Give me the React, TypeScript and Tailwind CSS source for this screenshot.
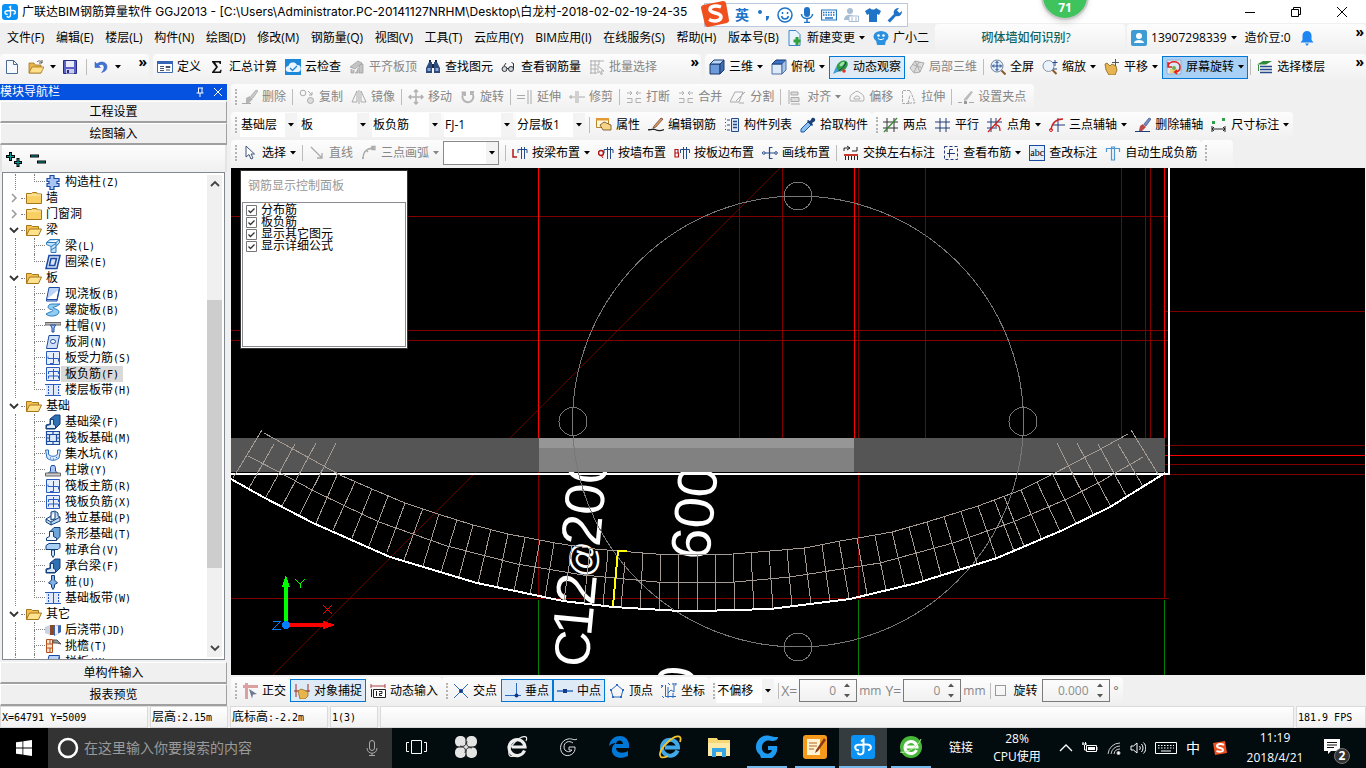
import type { ReactNode } from "react"
import { clsx } from "clsx"

// ---------- 图标 ----------
const icons: Record<string, ReactNode> = {
  app: (
    <>
      <rect width="16" height="16" rx="3" fill="#0a93f5" />
      <path d="M7 3.500 8.500 2.500v8.500c0 2.500-3 3-3.500 1M5.500 10C3 11 2 8 4 7c1-.5 3-.5 4.500-.5h2.500c3 0 3 3.500.5 3.500" fill="none" stroke="#fff" strokeWidth="1.400" />
    </>
  ),
  newFile: <path d="M2.500 1.500h7l4 4v9h-11zM9.500 1.500v4h4" fill="#f6faff" stroke="#4a6c96" />,
  open: (
    <>
      <path d="M1 14V4h5l1 2h6v8z" fill="#e9b44a" stroke="#9a6a12" strokeWidth=".7" />
      <path d="M1 14 4 8h12l-3 6z" fill="#ffe08a" stroke="#9a6a12" strokeWidth=".7" />
      <path d="M9 3c2-2 4-1 5 1m0-3v3h-3" fill="none" stroke="#555" />
    </>
  ),
  save: (
    <>
      <path d="M1.500 1.500h13v13h-13z" fill="#5a62c8" stroke="#262c86" />
      <path d="M4 2h8v6H4z" fill="#e9ecf8" />
      <path d="M4 10h8v4.500H4z" fill="#c9cdea" />
      <path d="M5 11h2v3H5z" fill="#262c86" />
    </>
  ),
  undo: <path d="M2 3v5.500h5.500L5.600 6.500C9 4.200 11.500 6 11 9c-.2 1.800-1 3-2.500 4.500 4.500-1 6-4 5.300-7C13 3 8 1.500 4 5z" fill="#4274d8" stroke="#2a55b0" strokeWidth=".5" />,
  define: (
    <>
      <path d="M.5 2.500h15v11H.5z" fill="#fff" stroke="#3c69b4" />
      <path d="M0 2h16v3H0z" fill="#3565b8" />
      <path d="M3 7.500h4M3 9.500h4M3 11.500h4M9 7.500h4v1H9zM9 11h4" stroke="#44536b" fill="none" />
    </>
  ),
  sigma: <path d="M3 2h9v3h-1.200L10 3.500H6.200L9 8l-3.500 4.500H10.500l1-1.700h1.200L12 14H3v-1l4-5-4-5z" fill="#111" />,
  cloud: (
    <>
      <path d="M0 0h16v16H0z" fill="#1e88d8" />
      <path d="M4 13a3 3 0 0 1-.5-6A4.500 4.500 0 0 1 12 6a3.500 3.500 0 0 1 .5 7z" fill="#eaf5ff" />
      <path d="m5 9 2.500 2.500L12 7" fill="none" stroke="#1e88d8" strokeWidth="1.300" />
    </>
  ),
  align: <path d="m1 8 8-6 4 2-7 6zM2 10v4h3v-3M6 14h3v-5M10 14h4V5h-2l-2 2z" fill="#c4c4c4" stroke="#999" strokeWidth=".7" />,
  binocular: (
    <>
      <path d="M1 9 4 3h3v11H1zM9 3h3l3 6v5H9z" fill="#2d4b7c" />
      <path d="M4 1h2v2H4zM10 1h2v2h-2zM7 5h2v4H7z" fill="#15294d" />
      <path d="M2.500 9h3v3h-3zM10.500 9h3v3h-3z" fill="#86a6d6" />
    </>
  ),
  glasses: (
    <>
      <circle cx="3.500" cy="10" r="2.500" fill="#cfd7e2" stroke="#333" />
      <circle cx="10" cy="10" r="2.500" fill="#cfd7e2" stroke="#333" />
      <path d="M6 9.500h1.500M12.500 9.500V4.500L10.500 3.500M3 7l2-3" stroke="#333" fill="none" />
    </>
  ),
  batch: <path d="M1 2h14M1 6h9M1 10h7M1 14h7M2 1v14M6 1v14M10 1v5M9 7l6 5h-3l1.500 3-1.500.5-1.300-3L9 14z" fill="none" stroke="#b0b0b0" />,
  cube: (
    <>
      <path d="M1 5h10v10H1z" fill="#6d9ad8" stroke="#1d3b70" />
      <path d="m1 5 4-4h10l-4 4z" fill="#bcd6f7" stroke="#1d3b70" />
      <path d="m11 5 4-4v10l-4 4z" fill="#3f6cb0" stroke="#1d3b70" />
    </>
  ),
  topView: (
    <>
      <path d="M1 5h10v10H1z" fill="#dfeaf8" stroke="#4a6ea8" />
      <path d="m1 5 4-4h10l-4 4z" fill="#3c74c8" stroke="#1d3b70" />
      <path d="m11 5 4-4v10l-4 4z" fill="#a9c6ea" stroke="#4a6ea8" />
    </>
  ),
  orbit: (
    <>
      <ellipse cx="9" cy="7" rx="6.500" ry="4.500" transform="rotate(-40 9 7)" fill="#2f9a48" />
      <ellipse cx="9" cy="5" rx="3" ry="1.500" transform="rotate(-40 9 5)" fill="#9be3a5" />
      <path d="M2 13c5-1 9-4 11-10" fill="none" stroke="#225" strokeWidth=".8" />
      <circle cx="11" cy="12" r="1.800" fill="#d33" />
      <path d="M0 15 3 8l3 4z" fill="#3c9cdc" />
    </>
  ),
  local3d: <path d="m1 9 5-7 9 2-4 9-6 1zM6 2l5 11M3.500 5.500l8.500 3M10 3l-5 10" fill="#ddd" stroke="#aaa" />,
  fullscreen: (
    <>
      <circle cx="7" cy="7" r="6" fill="#e4eefb" stroke="#6c7f99" />
      <path d="m11.500 11.500 4 4" stroke="#8a5a28" strokeWidth="2" />
      <path d="M7 2.500v9M2.500 7h9M5.500 4 7 2.500 8.500 4M5.500 10 7 11.500 8.500 10M4 5.500 2.500 7 4 8.500M10 5.500 11.500 7 10 8.500" fill="none" stroke="#234a8c" />
    </>
  ),
  zoom: (
    <>
      <circle cx="6.500" cy="7" r="5.500" fill="#eaf2fb" stroke="#8894a5" />
      <path d="m10.500 11 4 4" stroke="#8a5a28" strokeWidth="2" />
      <path d="M13 1v6M10.500 3.500h5M11 10h4" stroke="#234a8c" />
    </>
  ),
  pan: (
    <>
      <path d="M1 5l2-1 3 3 2-2 4 2 1 4-2 5H5l-3-5z" fill="#e6b552" stroke="#8d6418" strokeWidth=".8" />
      <path d="M11.500 0v7M8 3.500h7" stroke="#555" />
    </>
  ),
  rotateScreen: (
    <>
      <path d="M1 1h14v14H1z" fill="#dce8f4" stroke="#8fb0d0" />
      <path d="M4 10h8v4H4z" fill="#e8d27a" />
      <circle cx="8" cy="9" r="2" fill="#6fae4c" />
      <path d="M2 8c0-7 12-7 12 0 0 3-2 5-5 5M2 3v5h4M11 11l-2.500 2 2.500 2" fill="none" stroke="#e02020" strokeWidth="1.500" />
    </>
  ),
  floors: (
    <>
      <path d="M0 5.500 6 2h9L9 5.500z" fill="#2f8a3c" />
      <path d="M3 7.500h12M3 10.500h12M3 13.500h12" stroke="#234a8c" strokeWidth="1.500" />
      <path d="M1.500 6v6" stroke="#2f8a3c" />
    </>
  ),
  brush: (
    <>
      <path d="m9 7 5-6 2 1-5 7z" fill="#c9c9c9" stroke="#999" strokeWidth=".6" />
      <path d="m4 9 4-2 3 3-4 4H4z" fill="#b5b5b5" />
      <path d="M0 14.500h9" stroke="#aaa" />
    </>
  ),
  copy: (
    <>
      <circle cx="4" cy="4" r="2.800" fill="none" stroke="#aaa" />
      <circle cx="11.500" cy="11.500" r="3" fill="#ddd" stroke="#aaa" />
      <path d="m9 2 4 4m0-3v3h-3" stroke="#aaa" fill="none" />
    </>
  ),
  mirror: <path d="M6 2v11H1zM10 2v11h5zM8 1v14" fill="none" stroke="#aaa" />,
  move: <path d="M8 1v14M1 8h14M6 3l2-2 2 2M6 13l2 2 2-2M3 6 1 8l2 2M13 6l2 2-2 2" fill="none" stroke="#b0b0b0" strokeWidth="1.500" />,
  rotate: <path d="M12 4a5.500 5.500 0 1 1-8-.2M1.500 3.500h3.500V7M14 3h-3v3" fill="none" stroke="#b5b5b5" strokeWidth="2" />,
  extend: <path d="M0 6.500h8M0 9.500h8M11 1v14M14 1v14" fill="none" stroke="#aaa" />,
  trim: <path d="M0 8h6M10 8h6M7 2v12M9 2v12M2 6v4" fill="none" stroke="#aaa" />,
  breakIcon: <path d="M1 4h5M4 2l2 2-2 2M15 4h-5M12 2l-2 2 2 2M1 9.500h5v4H1M15 9.500h-5v4h5" fill="none" stroke="#b0b0b0" />,
  split: <path d="M0 13h9l4-10H5zM6 12l9-9M9 14h5" fill="none" stroke="#aaa" />,
  alignEdge: <path d="M2 1v14M4 3h7v3H4zM4 8.500h8v4H4zM4 15h9" fill="#ddd" stroke="#aaa" />,
  offset: <path d="M5 4a3.500 3.500 0 0 1 6 0c3 1 5 4 3.500 8h-13C0 8 2 5 5 4zM5 10c0-4 6-4 6 0z" fill="none" stroke="#b0b0b0" />,
  stretch: <path d="M9 1.500H1.500v13H9M9 2l2 4 3 8H7l2-8" fill="none" stroke="#aaa" strokeDasharray="3 1" />,
  grip: (
    <>
      <path d="M0 13.500h4M11 13.500h5" stroke="#aaa" />
      <path d="m6 10 7-8 2 1-6 8-3 1z" fill="#bbb" />
      <path d="M6 12h3v3H6z" fill="#999" />
    </>
  ),
  props: (
    <>
      <path d="M.5 1.500h12v9H.5z" fill="#fff6dc" stroke="#b88428" />
      <path d="M0 1h13v2.500H0z" fill="#e39a35" />
      <path d="m4 8 4-3 7 3v5H7z" fill="#f5d48a" stroke="#6a4a14" strokeWidth=".8" />
    </>
  ),
  editBar: (
    <>
      <path d="M0 12.500c3 1 5-1 7 0s5 2 9 0" stroke="#222" strokeWidth="1.300" fill="none" />
      <path d="m6 9 7-8 2 1-7 8-3 1z" fill="#d89a5a" stroke="#522" strokeWidth=".6" />
    </>
  ),
  list: (
    <>
      <path d="M1 2h1M1 5.500h1M1 9h1M1 12.500h1M3 3h3M3 8h3M3 13h3" stroke="#234a8c" />
      <path d="M7.500 1.500h7v13h-7z" fill="#dfe8f5" stroke="#234a8c" />
      <path d="M9 4.500h4M9 7.500h4M9 10.500h4" stroke="#234a8c" strokeWidth="1.500" />
    </>
  ),
  picker: (
    <>
      <path d="M1 15v-3l7-7 3 3-7 7z" fill="#8cc0ef" stroke="#1d5ba8" />
      <path d="m8 3 2 1 2-3c2-1 4 1 3 3l-3 2 1 2-1 1-5-5z" fill="#1c3f77" />
    </>
  ),
  twoPoint: <path d="M0 5h15M0 11h15M5 1v14M11 1v14" fill="none" stroke="#223a7a" />,
  axisPoint: (
    <>
      <path d="M0 5h15M0 11h15M4 1v14M11 1v14" fill="none" stroke="#333" />
      <path d="M1 15 14 1" stroke="#3a8a3a" strokeWidth="1.300" />
    </>
  ),
  axisAngle: (
    <>
      <path d="M0 5h15M0 11h10M4 1v14M9 1v9" fill="none" stroke="#223a7a" />
      <path d="M1 15 14 1M9 8c3 0 4 2 4 6" stroke="#c22" fill="none" strokeWidth="1.300" />
    </>
  ),
  threeAxis: (
    <>
      <path d="M9 1v14M4 8h12" stroke="#223a7a" />
      <path d="M14 2C7 2 3 6 2 13" fill="none" stroke="#c22" strokeWidth="1.500" />
      <circle cx="2" cy="13" r="1.500" fill="none" stroke="#c22" />
    </>
  ),
  delAxis: (
    <>
      <path d="m9 7 5-6 2 1-5 7z" fill="#7690c8" stroke="#223a7a" strokeWidth=".6" />
      <path d="m5 9 3-2 3 3-4 4H4z" fill="#b84a4a" />
      <path d="M0 14.500h15" stroke="#223a7a" />
    </>
  ),
  dimension: (
    <>
      <path d="M1 9v6M14 9v6M1 12h13M3 10l-2 2 2 2M12 10l2 2-2 2" fill="none" stroke="#222" />
      <path d="M1 4h3v3H1zM11 1h3v3h-3z" fill="#2fa04a" />
    </>
  ),
  cursor: <path d="M4 1v11l3-2.500L9 14l2-1-2-4h3.500z" fill="#fff" stroke="#3d567c" />,
  lineTool: <path d="m2 2 11 11m0-5v5H8" fill="none" stroke="#aaa" strokeWidth="1.300" />,
  arcTool: <path d="M2 14C2 7 6 3 13 3M1 13h2M11 1.500h3v3h-3zM5 5l2 2" fill="none" stroke="#aaa" strokeWidth="1.300" />,
  byBeam: (
    <>
      <path d="M1 4v8h4" fill="none" stroke="#b01818" strokeWidth="1.500" />
      <path d="M6 8V4.500h9V8M9.500 2v12M12.500 2v12" stroke="#234a8c" fill="none" />
    </>
  ),
  byWall: (
    <>
      <circle cx="3" cy="8" r="2.500" fill="none" stroke="#b01818" strokeWidth="1.500" />
      <path d="m3 10 2 3" stroke="#b01818" />
      <path d="M6 8V4.500h9V8M9.500 2v12M12.500 2v12" stroke="#234a8c" fill="none" />
    </>
  ),
  bySlab: (
    <>
      <path d="M1 4.500h3v3.500H1zM1 8h3.500v4H1z" fill="none" stroke="#b01818" strokeWidth="1.200" />
      <path d="M6.500 8V4.500h9V8M9.500 2v12M12.500 2v12" stroke="#234a8c" fill="none" />
    </>
  ),
  byLine: (
    <>
      <path d="M3 8h4M9.500 8h3M10.500 2.500h-3v11h3M9.500 8H7.500" fill="none" stroke="#234a8c" strokeWidth="1.200" />
      <circle cx="1.800" cy="8" r="1.300" fill="none" stroke="#234a8c" />
      <circle cx="14" cy="8" r="1.300" fill="none" stroke="#234a8c" />
    </>
  ),
  swap: (
    <>
      <path d="M1 6V3h6M4 1l3 2-3 2M14 2v4H9" fill="none" stroke="#222" />
      <path d="M1 9h14v2H1z" fill="#c83a2a" />
      <path d="M2.500 11v4M5.500 11v4M8.500 11v4M11.500 11v4M14.500 11v4" stroke="#222" />
    </>
  ),
  viewBar: (
    <>
      <path d="M1.500 1.500h13v13h-13z" fill="none" stroke="#223a7a" strokeDasharray="3 2" />
      <path d="M10 4.500H6.500v8M4 8.500h8" fill="none" stroke="#223a7a" />
    </>
  ),
  autoBar: <path d="M1.500 7V3.500h13V7M6.500 2v13h3V2z" fill="none" stroke="#4c96d4" strokeWidth="1.200" />,
  ortho: (
    <>
      <path d="M1 2h15v3H1zM3 0h3v16H3z" fill="#dba0a0" />
      <path d="m7 6 8 5-4 .5-1 4z" fill="#6b7890" />
    </>
  ),
  snap: (
    <>
      <path d="M2 1v13M14 1v8M0 8h5M11 8h5" stroke="#a02828" />
      <path d="m4 8 3-2 3 1 4 2v4l-3 3H6z" fill="#e8b44c" stroke="#8d6418" strokeWidth=".7" />
    </>
  ),
  dynInput: (
    <>
      <path d="M1 1v4M15 1v4M1 3h14" stroke="#b04040" />
      <path d="M3.500 6.500h12v8h-12z" fill="#fff" stroke="#222" />
      <path d="M6.500 8v5M9 8.500h3v2H9.500v2H12" stroke="#222" fill="none" />
      <path d="M1.500 6v8" stroke="#222" />
    </>
  ),
  cross: (
    <>
      <path d="M1 1 15 15M15 1 1 15" stroke="#2a6ac0" />
      <circle cx="8" cy="8" r="2" fill="#123a8a" />
    </>
  ),
  perp: (
    <>
      <path d="M0 12.500h16M11.500 0v13" stroke="#2a6ac0" />
      <circle cx="11.500" cy="12.500" r="2" fill="#123a8a" />
    </>
  ),
  mid: (
    <>
      <path d="M0 8h16" stroke="#2a6ac0" strokeWidth="1.500" />
      <path d="M6 6h4v4H6z" fill="#123a8a" />
    </>
  ),
  vertex: (
    <>
      <path d="m8 2 6 5-2 7H4L2 7z" fill="none" stroke="#2a6ac0" />
      <path d="M7 1h2v2H7zM1 6h2v2H1zM13 6h2v2h-2zM3 13h2v2H3zM11 13h2v2h-2z" fill="#2a6ac0" />
    </>
  ),
  coord: <path d="M4.500 2v11.500H15M7 4v6l3-3 3 2V3M0 2l2 2M2 2 0 5M7 0l2 2M12 0h3v2h-3zM1 13l2 2M7 10v5M12 10v5" fill="none" stroke="#2a6ac0" />,
  newChange: (
    <>
      <path d="M2 .500h7l4 4v11H2z" fill="#eaf4ff" stroke="#3c86c8" />
      <path d="M10 7v8M6.500 11h7" stroke="#2fa03a" strokeWidth="3" />
    </>
  ),
  mascot: (
    <>
      <ellipse cx="8" cy="6.500" rx="7.500" ry="5.500" fill="#2a90e0" />
      <path d="M3 10h10l-1 5H4z" fill="#2a90e0" />
      <circle cx="5.500" cy="5.500" r="1.300" fill="#fff" />
      <circle cx="10.500" cy="5.500" r="1.300" fill="#fff" />
      <path d="M5 8.500c2 1.500 4 1.500 6 0" stroke="#fff" fill="none" />
    </>
  ),
  user: (
    <>
      <rect width="16" height="16" rx="2" fill="#3f9bd4" />
      <circle cx="8" cy="6" r="3" fill="#fff" />
      <path d="M3 13c0-4 10-4 10 0z" fill="#fff" />
    </>
  ),
  bell: <path d="M8 1a4.500 4.500 0 0 1 4.500 4.500V10l2 2.500h-13l2-2.500V5.500A4.500 4.500 0 0 1 8 1zM6 13.500h4L8 16z" fill="#1e86f0" />,
  folder: (
    <>
      <path d="M.5 3.500h5l1-1h4l1 1.500h4v9.500H.5z" fill="#f7cf63" stroke="#a5761c" />
      <path d="M1 5h14" stroke="#fff1bd" />
    </>
  ),
  folderOpen: (
    <>
      <path d="M.5 13.500V3.500h5l1 1h6V7" fill="#f1c24e" stroke="#a5761c" />
      <path d="m.5 13.500 3-6.500h12l-3 6.500z" fill="#ffe28e" stroke="#a5761c" />
    </>
  ),
  column: <path d="M5 1.500h4v3h5v3h-2v2h2v3H9v3H5v-3H2v-3h2v-2H2v-3h3z" fill="#a9c6f2" stroke="#1c4aa0" strokeWidth="1.200" />,
  beam: <path d="M1.500 4.500 5 1.500h9.500v3l-3.500 4v6H6v-6l-4.500-2zM1.500 4.500H11l3.500-3M11 4.500v4M6 8.500l5-3M6 12l5-3" fill="#c5e2fa" stroke="#2c7cc0" />,
  ringBeam: <path d="M4 1.500h11l-3 13H1z M6 4.500h5.500l-1.800 7H4.400z" fill="#d7e5fb" stroke="#1c4aa0" strokeWidth="1.500" />,
  slab: <path d="M4 1.500h10.500l-2.500 12H1.500z M1.500 13.500v1.500H12l2.500-12" fill="#bcd3f8" stroke="#1c4aa0" />,
  spiral: <path d="M15 2H7C2 2 2 7 6 7.500c3 .5 2 2-1 2.500L1 12c2 3 12 3 13-2 0-3-6-3-6-4.500L12 4z" fill="#8fcdf2" stroke="#2c7cc0" />,
  cap: (
    <>
      <path d="M0 4.500h16v2.500H0z" fill="#bbb" stroke="#666" />
      <path d="M5.500 7h5l-1.500 3v4H7v-4z" fill="#a9c6f2" stroke="#1c4aa0" />
    </>
  ),
  slabHole: (
    <>
      <path d="M4 1.500h10.500l-2.500 13H1.500z" fill="#d0e0fa" stroke="#1c4aa0" />
      <ellipse cx="8" cy="7.500" rx="2.500" ry="2" fill="#fff" stroke="#1c4aa0" />
    </>
  ),
  barMain: (
    <>
      <path d="M1.500 1.500h13v13h-13z" fill="#e5eefc" stroke="#2a5cc0" />
      <path d="M8.500 3v10.500M3 8.500V6.500M3 8.500h10.500v3M5 13.500h3.500" fill="none" stroke="#2a5cc0" />
    </>
  ),
  barNeg: (
    <>
      <path d="M1.500 1.500h13v13h-13z" fill="#e5eefc" stroke="#2a5cc0" />
      <path d="M8.500 3v10.500M3.500 8V5.500h10V8M3.500 12.500v-2.500h10v2.500" fill="none" stroke="#2a5cc0" />
    </>
  ),
  strip: (
    <>
      <path d="M1 3h14v10H1z" fill="#dfe9fb" />
      <path d="M0 13.500h16M0 2.500h16M8.500 3v10" fill="none" stroke="#2a5cc0" />
      <path d="M3.500 4v9M13.500 4v9" stroke="#2a5cc0" strokeDasharray="2 1" />
    </>
  ),
  footBeam: (
    <>
      <path d="M1 15v-4l4-1V5l5-4h5v9l-5 5z" fill="#2f6fb4" stroke="#123f78" />
      <path d="M1.500 14.500v-3l4-1V5.500h3v5l2 1v3z" fill="#dceaf8" stroke="#123f78" />
    </>
  ),
  raft: <path d="M1.500 1.500h13v13h-13zM4.500 4.500h7v7h-7zM8 1v4M8 11v4M1 8h4M11 8h4M1 4.500h3M12 4.500h3M1 11.500h3M12 11.500h3" fill="#dceaf8" stroke="#1c4aa0" strokeWidth="1.200" />,
  pit: <path d="M.5 4h3v4c1 3 8 3 9 0V4h3L14 12c-3 3-9 3-12 0zM5 12h1M8 13h1M11 11.500h1" fill="#d6e9fb" stroke="#2c6cc0" />,
  pier: (
    <>
      <path d="M5.500 9V5.500l1-2h3l1 2V9l2 2h-9z" fill="#a9c6f2" stroke="#1c4aa0" />
      <path d="M.5 11h15v3H.5z" fill="#ccc" stroke="#666" />
    </>
  ),
  isolated: <path d="m1 9 5-3V2l4-1 3 2v3l2 1v4l-9 4-5-3zM6 6v4l4-1V2M1 9l5 3 9-5M6 12v3" fill="#bcd9f5" stroke="#123f78" />,
  stripFoot: (
    <>
      <path d="M5 5.500 9 1.500h6v9l-4 4z" fill="#6fa4d8" stroke="#123f78" />
      <path d="M1.500 14.500v-2.500l3-1.500v-5h4v5l3 1.500v2.500z" fill="#eef5fc" stroke="#123f78" />
    </>
  ),
  pileCap: (
    <>
      <path d="m1 3.500 3-2h11v4l-2 2H1z" fill="#a9d0f5" stroke="#123f78" />
      <path d="M6.500 8h3v5L8 15.500 6.500 13z" fill="#cfe4f8" stroke="#123f78" />
    </>
  ),
  pile: <path d="M6.500 1.500h3V6l3 3-3 1.500v2.500L8 15.500 6.500 13v-2.500L3.500 9l3-3z" fill="#7fb0e6" stroke="#123f78" />,
  pour: (
    <>
      <path d="M5 3h5v10H5z" fill="#8a4a2a" />
      <path d="m0 5 5-2v10l-5-2z" fill="#c9d3e4" />
      <path d="m9 4 7-1v7l-7 4z" fill="#3d62ae" />
      <path d="m10 4 3 0v8l-3 1z" fill="#e9eef8" />
    </>
  ),
  eave: (
    <>
      <path d="M1.500 1.500h6v13h-6zM2 6h6M2 10h6M5 2v4M5 10v5" fill="#fbe3cf" stroke="#b0501c" />
      <path d="M8 2h4l4 4-4-1H8z" fill="#999" stroke="#555" />
    </>
  ),
}

function Icon({ name, className = "size-4" }: { name: string; className?: string }) {
  return (
    <svg viewBox="0 0 16 16" className={clsx("shrink-0", className)} aria-hidden="true">
      {icons[name]}
    </svg>
  )
}

// ---------- 工具栏部件 ----------
function Caret({ className = "" }: { className?: string }) {
  return (
    <svg viewBox="0 0 6 4" className={clsx("h-1 w-1.5 shrink-0", className)} aria-hidden="true">
      <path d="M0 0h6L3 3.500z" fill="currentColor" />
    </svg>
  )
}

function Group({ children, className = "" }: { children: ReactNode; className?: string }) {
  return (
    <div className={clsx("flex h-[27px] shrink-0 items-center rounded-sm bg-linear-to-b from-[#fdfdfd] to-[#f0f0f0]", className)}>
      {children}
    </div>
  )
}

function Handle() {
  return <span className="ml-1 mr-px h-4 w-0 shrink-0 border-l-2 border-dotted border-[#b4b4b4]" />
}

function Sep() {
  return <span className="mx-0.5 h-4 w-px shrink-0 bg-[#bdbdbd]" />
}

type ToolProps = { icon?: string; label: string; caret?: boolean; active?: boolean; disabled?: boolean; strong?: boolean }

function Tool({ icon, label, caret, active, disabled, strong }: ToolProps) {
  return (
    <button
      disabled={disabled}
      className={clsx(
        "flex h-[23px] shrink-0 items-center gap-1 whitespace-nowrap px-1",
        active && "outline outline-[#0078d7] -outline-offset-1",
        active && (strong ? "bg-[#a9d1f5]" : "bg-[#deebf7]"),
        disabled ? "text-[#868686]" : "text-black",
      )}
    >
      {icon && <Icon name={icon} />}
      <span>{label}</span>
      {caret && <Caret />}
    </button>
  )
}

function Combo({ label, value, className }: { label: string; value: string; className: string }) {
  return (
    <div className={clsx("relative h-6 shrink-0 bg-white", className)}>
      <select aria-label={label} className="h-full w-full appearance-none bg-transparent pl-px pr-3 outline-none">
        <option>{value}</option>
      </select>
      <span className="pointer-events-none absolute inset-y-0 right-0 flex w-3 items-center justify-center bg-[#f3f3f3]">
        <Caret />
      </span>
    </div>
  )
}

function More() {
  return <button className="shrink-0 self-start pr-0.5 text-sm leading-4 font-bold" aria-label="更多">»</button>
}

function Spin({ id, value, className }: { id: string; value: string; className: string }) {
  return (
    <div className={clsx("flex h-[23px] shrink-0 border border-[#7a7a7a] text-[#8c8c8c]", className)}>
      <input id={id} defaultValue={value} disabled className="w-0 flex-1 bg-transparent text-right outline-none" />
      <div className="ml-2 flex w-3 flex-col justify-around text-[#555]">
        <button aria-label="增加"><Caret className="rotate-180" /></button>
        <button aria-label="减少"><Caret /></button>
      </div>
    </div>
  )
}

// 宋体风格文字:半角字符占 6px
function Song({ text }: { text: string }) {
  return (
    <>
      {text.split(/([\x20-\x7e]+)/).map((part, i) =>
        i % 2 ? (
          <span key={i} className="font-['DejaVu_Sans_Mono',monospace] text-[10px]">{part}</span>
        ) : (
          part
        ),
      )}
    </>
  )
}

// ---------- 标题栏和菜单 ----------
function TitleBar() {
  return (
    <header className="relative flex h-[23px] shrink-0 items-center bg-white">
      <Icon name="app" className="ml-0.5 size-4" />
      <h1 className="ml-1 flex-1 whitespace-nowrap font-['Inter','Noto_Sans_CJK_SC',sans-serif]">
        广联达BIM钢筋算量软件 GGJ2013 - [C:\Users\Administrator.PC-20141127NRHM\Desktop\白龙村-2018-02-02-19-24-35
      </h1>
      <button aria-label="最小化" className="flex w-[46px] justify-center">
        <svg viewBox="0 0 12 12" className="size-3"><path d="M1 6.500h10" stroke="#000" /></svg>
      </button>
      <button aria-label="还原" className="flex w-[46px] justify-center">
        <svg viewBox="0 0 12 12" className="size-3"><path d="M1.500 3.500h7v7h-7zM3.500 3.500v-2h7v7h-2" fill="none" stroke="#000" /></svg>
      </button>
      <button aria-label="关闭" className="mr-px flex w-[46px] justify-center">
        <svg viewBox="0 0 12 12" className="size-3"><path d="m1 1 10 10M11 1 1 11" stroke="#000" /></svg>
      </button>
      <InputMethodBar />
      <div className="absolute -top-7 left-[1041px] z-10 flex size-12 items-end justify-center rounded-full border-2 border-[#c9c9c9] bg-[#3fc35c] pb-0.5 text-xs font-bold text-white shadow-md">71</div>
    </header>
  )
}

function InputMethodBar() {
  return (
    <div className="absolute left-[704px] top-[3px] z-10 flex h-6 w-[204px] items-center justify-between border border-[#b9c9e0] bg-white pl-[30px] pr-1 text-[#1f74c8]">
      <svg viewBox="0 0 28 28" className="absolute -left-1 -top-1 size-7">
        <path d="m2 5 20-4a3 3 0 0 1 3 2l3 17a3 3 0 0 1-2 3L7 27a3 3 0 0 1-3-2L0 8a3 3 0 0 1 2-3z" fill="#f0501e" />
        <path d="M20 7c-5-2-11-1-11 2.500C9 14 20 12 20 17c0 4-7 5-12 2.500" fill="none" stroke="#fff" strokeWidth="3.500" />
      </svg>
      <b className="text-sm">英</b>
      <svg viewBox="0 0 16 16" className="size-4"><circle cx="5" cy="5" r="2" fill="currentColor" /><path d="M11 9h3c0 3-1 4-3 5z" fill="currentColor" /></svg>
      <svg viewBox="0 0 16 16" className="size-4" fill="none" stroke="currentColor" strokeWidth="1.500"><circle cx="8" cy="8" r="7" /><path d="M4.500 9c1 4 6 4 7 0M5.500 5v2M10.500 5v2" /></svg>
      <svg viewBox="0 0 16 16" className="size-4"><rect x="5" y="0" width="6" height="10" rx="3" fill="currentColor" /><path d="M2.500 7c0 6 11 6 11 0M8 12v4M5 15.500h6" fill="none" stroke="currentColor" strokeWidth="1.500" /></svg>
      <svg viewBox="0 0 16 16" className="size-4"><path d="M.5 3h15v10H.5z" fill="none" stroke="currentColor" strokeWidth="1.200" /><path d="M2 5.500h12M2 8h12" stroke="currentColor" strokeWidth="1.500" strokeDasharray="1.500 1" /><path d="M4 11h8" stroke="currentColor" strokeWidth="1.500" /></svg>
      <svg viewBox="0 0 16 16" className="size-4"><circle cx="7" cy="4" r="3" fill="#a9bdd4" /><path d="M1 13c0-7 11-7 11 0z" fill="#a9bdd4" /><path d="M6 9h9.500v5.500H6z" fill="#fff" stroke="#a9bdd4" /><path d="M8 11h2M8 13h2M12 11h2M12 13h2" stroke="#a9bdd4" /></svg>
      <svg viewBox="0 0 16 16" className="size-4"><path d="M5 1c1 2 5 2 6 0l5 3-2 4-2-1v8H4V7L2 8 0 4z" fill="currentColor" /></svg>
      <svg viewBox="0 0 16 16" className="size-4"><path d="M15 4a4.500 4.500 0 0 1-6 5l-6 6.500-2.500-2L7 7a4.500 4.500 0 0 1 5-6L10 3.500 12.500 6z" fill="currentColor" /></svg>
    </div>
  )
}

const menus = [
  "文件(F)", "编辑(E)", "楼层(L)", "构件(N)", "绘图(D)", "修改(M)", "钢筋量(Q)", "视图(V)",
  "工具(T)", "云应用(Y)", "BIM应用(I)", "在线服务(S)", "帮助(H)", "版本号(B)",
]

function MenuBar() {
  return (
    <nav className="flex h-[29px] shrink-0 items-center">
      <div className="flex w-[783px] shrink-0 items-center justify-between pl-[7px] pr-1">
        {menus.map((m) => (
          <button key={m} className="whitespace-nowrap">{m}</button>
        ))}
      </div>
      <Tool icon="newChange" label="新建变更" caret />
      <Tool icon="mascot" label="广小二" />
      <Group className="ml-0.5 w-[190px] justify-center pr-2">
        <a href="#help" className="font-medium text-[#0b6464]">砌体墙如何识别?</a>
      </Group>
      <Group className="ml-0.5 flex-1">
        <Tool icon="user" label="13907298339" caret />
        <Tool label="造价豆:0" />
        <button aria-label="消息" className="px-1"><Icon name="bell" /></button>
        <span className="flex-1" />
        <More />
      </Group>
    </nav>
  )
}

function MainToolbar() {
  return (
    <div className="flex h-[30px] shrink-0 items-center">
      <Group className="w-[149px] pl-1">
        <button aria-label="新建"><Icon name="newFile" /></button>
        <button aria-label="打开" className="ml-2 flex items-center gap-1.5"><Icon name="open" /><Caret /></button>
        <button aria-label="保存" className="mx-1.5"><Icon name="save" /></button>
        <Sep />
        <button aria-label="撤销" className="ml-1 flex items-center gap-1.5"><Icon name="undo" /><Caret /></button>
        <span className="flex-1" />
        <More />
      </Group>
      <Group className="ml-1 w-[548px]">
        <Tool icon="define" label="定义" />
        <Tool icon="sigma" label="汇总计算" />
        <Tool icon="cloud" label="云检查" />
        <Tool icon="align" label="平齐板顶" disabled />
        <Tool icon="binocular" label="查找图元" />
        <Tool icon="glasses" label="查看钢筋量" />
        <Tool icon="batch" label="批量选择" disabled />
        <span className="flex-1" />
        <More />
      </Group>
      <Group className="ml-1 flex-1">
        <Tool icon="cube" label="三维" caret />
        <Tool icon="topView" label="俯视" caret />
        <Tool icon="orbit" label="动态观察" active />
        <Tool icon="local3d" label="局部三维" disabled />
        <Sep />
        <Tool icon="fullscreen" label="全屏" />
        <Tool icon="zoom" label="缩放" caret />
        <Tool icon="pan" label="平移" caret />
        <Tool icon="rotateScreen" label="屏幕旋转" caret active strong />
        <Sep />
        <Tool icon="floors" label="选择楼层" />
        <span className="flex-1" />
        <More />
      </Group>
    </div>
  )
}

// ---------- 模块导航栏 ----------
type TreeGroup = { label: string; open?: boolean; items: [string, string][] }

const tree: TreeGroup[] = [
  { label: "墙", items: [] },
  { label: "门窗洞", items: [] },
  { label: "梁", open: true, items: [["beam", "梁(L)"], ["ringBeam", "圈梁(E)"]] },
  {
    label: "板",
    open: true,
    items: [
      ["slab", "现浇板(B)"], ["spiral", "螺旋板(B)"], ["cap", "柱帽(V)"], ["slabHole", "板洞(N)"],
      ["barMain", "板受力筋(S)"], ["barNeg", "板负筋(F)"], ["strip", "楼层板带(H)"],
    ],
  },
  {
    label: "基础",
    open: true,
    items: [
      ["footBeam", "基础梁(F)"], ["raft", "筏板基础(M)"], ["pit", "集水坑(K)"], ["pier", "柱墩(Y)"],
      ["barMain", "筏板主筋(R)"], ["barNeg", "筏板负筋(X)"], ["isolated", "独立基础(P)"], ["stripFoot", "条形基础(T)"],
      ["pileCap", "桩承台(V)"], ["footBeam", "承台梁(F)"], ["pile", "桩(U)"], ["strip", "基础板带(W)"],
    ],
  },
  { label: "其它", open: true, items: [["pour", "后浇带(JD)"], ["eave", "挑檐(T)"], ["slab", "栏板(K)"]] },
]

function TreeItem({ icon, label, last }: { icon: string; label: string; last?: boolean }) {
  const selected = label === "板负筋(F)"
  return (
    <li className="flex h-4 items-center pl-3">
      <span className="h-4 w-[19px] shrink-0 border-l border-dotted border-[#808080]" />
      <span className="flex h-4 w-[11px] shrink-0 flex-col">
        <span className="h-2 border-b border-l border-dotted border-[#808080]" />
        <span className={clsx("h-2", !last && "border-l border-dotted border-[#808080]")} />
      </span>
      <Icon name={icon} />
      <span className={clsx("h-4 whitespace-nowrap px-1 leading-4", selected && "bg-[#d9d9d9]")}>
        <Song text={label} />
      </span>
    </li>
  )
}

function TreeNode({ group }: { group: TreeGroup }) {
  return (
    <li>
      <div className="flex h-4 items-center pl-1.5">
        <svg viewBox="0 0 10 10" className="size-2.5 shrink-0" fill="none">
          {group.open ? (
            <path d="m1 3 4 4 4-4" stroke="#333" strokeWidth="1.800" />
          ) : (
            <path d="m3 1 4 4-4 4" stroke="#999" strokeWidth="1.500" />
          )}
        </svg>
        <span className="ml-0.5 mr-px w-1 border-b border-dotted border-[#808080]" />
        <Icon name={group.open ? "folderOpen" : "folder"} />
        <span className="ml-1 whitespace-nowrap leading-4">{group.label}</span>
      </div>
      <ul>
        {group.items.map(([icon, label], i) => (
          <TreeItem key={label} icon={icon} label={label} last={i === group.items.length - 1 && group.label !== "其它"} />
        ))}
      </ul>
    </li>
  )
}

function NavButton({ children }: { children: string }) {
  return (
    <button className="h-[22px] w-full shrink-0 border border-b-2 border-white border-b-[#a0a0a0] border-r-[#a0a0a0] bg-[#f0f0f0] text-center leading-4">
      {children}
    </button>
  )
}

function Sidebar() {
  return (
    <aside className="mr-1 flex w-[227px] shrink-0 flex-col pt-0.5">
      <div className="flex h-4 shrink-0 items-center bg-[#0551e0] pr-1 leading-4 text-white">
        <h2 className="flex-1">模块导航栏</h2>
        <button aria-label="固定" className="mr-2">
          <svg viewBox="0 0 10 10" className="size-2.5"><path d="M3 1h5M3.500 1v5M7 1v5M1.500 6h7M5 6v4" fill="none" stroke="#fff" /></svg>
        </button>
        <button aria-label="关闭面板">
          <svg viewBox="0 0 10 10" className="size-2.5"><path d="m1 1 8 8M9 1 1 9" stroke="#fff" /></svg>
        </button>
      </div>
      <div className="h-px shrink-0" />
      <NavButton>工程设置</NavButton>
      <NavButton>绘图输入</NavButton>
      <div className="flex h-[27px] shrink-0 items-center gap-2 border-x-2 border-[#e4e4e4] bg-linear-to-b from-[#fdfdfd] to-[#f0f0f0] pl-1">
        <button aria-label="全部展开">
          <svg viewBox="0 0 16 16" className="size-4"><path d="M4.500 1v9M0 5.500h9M12 7v9M8 11.500h8" stroke="#000" strokeWidth="3" /><path d="M4.500 2v7M1 5.500h7M12 8v7M9 11.500h6" stroke="#0a9a94" strokeWidth="1.200" /></svg>
        </button>
        <button aria-label="全部折叠">
          <svg viewBox="0 0 16 16" className="size-4"><path d="M0 5h9M7 11h9" stroke="#000" strokeWidth="3" /><path d="M1 5h7M8 11h7" stroke="#0a9a94" strokeWidth="1.200" /></svg>
        </button>
      </div>
      <div className="ml-0.5 mr-0.5 flex min-h-0 flex-1 border border-[#828790] bg-white">
        <ul className="mt-px flex-1 overflow-hidden">
          <TreeItem icon="column" label="构造柱(Z)" last />
          {tree.map((g) => (
            <TreeNode key={g.label} group={g} />
          ))}
        </ul>
        <div className="m-0.5 flex w-[15px] shrink-0 flex-col items-center bg-[#f0f0f0]">
          <svg viewBox="0 0 10 10" className="my-1 size-2.5"><path d="m1 7 4-4 4 4" fill="none" stroke="#444" strokeWidth="1.800" /></svg>
          <div className="flex-[107]" />
          <div className="w-full flex-[270] bg-[#cdcdcd]" />
          <div className="flex-[71]" />
          <svg viewBox="0 0 10 10" className="my-1 size-2.5"><path d="m1 3 4 4 4-4" fill="none" stroke="#444" strokeWidth="1.800" /></svg>
        </div>
      </div>
      <div className="h-0.5 shrink-0" />
      <NavButton>单构件输入</NavButton>
      <NavButton>报表预览</NavButton>
    </aside>
  )
}

// ---------- 绘图区 ----------
const outerArc = "231,479 263,497 313,523 390,557 477,583 563,601 613,607 680,611 700,611 770,609 850,599 917,583 997,558 1063,530 1110,507 1165,473"
const innerArc = "264,433 340,475 372,489 405,503 438,514 473,525 508,534 555,543 595,549 618,551 656,554 690,555 733,554 770,551 805,548 840,541 858,538 892,532 927,522 978,506 1021,490 1053,474 1095,452 1128,434"
const midArc = "248,456 279,472 312,490 345,506 379,522 447,546 517,564 583,575 657,582 735,582 790,577 880,563 953,543 1013,522 1067,499 1100,482 1143,457"

// 分布筋: [x1, y1, x2, y2]
const ribs = [
  [262, 430, 233, 478], [274, 444, 249, 488], [295, 444, 266, 497], [316, 443, 282, 506], [336, 443, 299, 516],
  [338, 473, 316, 523], [355, 482, 333, 530], [372, 489, 352, 538], [388, 496, 369, 546], [405, 503, 387, 552],
  [423, 508, 404, 560], [439, 514, 423, 566], [457, 520, 441, 572], [473, 525, 459, 577], [491, 529, 478, 583],
  [508, 534, 497, 587], [525, 538, 514, 591], [540, 540, 530, 595], [554, 543, 545, 597], [572, 546, 564, 600],
  [590, 548, 584, 603], [608, 551, 603, 605], [625, 562, 621, 607], [643, 553, 640, 608], [661, 554, 659, 610],
  [679, 555, 678, 610], [697, 555, 697, 610], [715, 554, 716, 610], [733, 554, 735, 610], [751, 553, 754, 609],
  [769, 551, 773, 608], [787, 550, 792, 606], [804, 547, 811, 604], [822, 545, 830, 601], [839, 541, 849, 598],
  [857, 538, 867, 594], [875, 536, 886, 590], [892, 532, 905, 586], [909, 527, 923, 580], [927, 522, 941, 575],
  [944, 517, 960, 569], [961, 512, 977, 563], [978, 506, 996, 557], [994, 499, 1014, 551], [1004, 496, 1024, 546],
  [1021, 490, 1042, 540], [1037, 482, 1060, 531], [1053, 475, 1076, 523], [1057, 443, 1093, 514], [1077, 443, 1111, 507],
  [1098, 444, 1127, 497], [1118, 444, 1144, 488], [1131, 430, 1158, 474],
]

function Drawing() {
  return (
    <svg viewBox="231 168 1134 507" preserveAspectRatio="xMinYMin slice" className="block h-full w-full" shapeRendering="crispEdges">
      <g stroke="#800000">
        {[739, 782, 925, 1121, 1145, 1150].map((x) => (
          <path key={x} d={`M${x}.5 168V472`} />
        ))}
        {[538, 858, 1164].map((x) => (
          <path key={x} d={`M${x}.5 168V598`} />
        ))}
        {[216, 330, 340, 598].map((y) => (
          <path key={y} d={`M231 ${y}.5H1169`} />
        ))}
        <path d="M1165 311.500H1365M1165 445.500H1365M1165 464.500H1365M1165 474.500H1365" />
        <path d="M273 675 780 168" opacity=".8" />
      </g>
      <path d="M538.500 168V438M854.500 168V472M1164.500 168V438M1165 455.500H1365" stroke="#f00" />
      <path d="M538.500 600V675M858.500 600V675M1164.500 600V675" stroke="#008000" />

      <g fill="#fff" className="font-['Liberation_Sans',sans-serif]">
        <g transform="translate(588 668) rotate(-84.500)">
          <text fontSize="50">C</text>
          <text x="31" fontSize="56">12</text>
          <text x="90" y="-4" fontSize="35">@</text>
          <text x="121" fontSize="56">200</text>
        </g>
        <text transform="translate(709 561) rotate(-84.500)" fontSize="56">600</text>
        <text transform="translate(694 699) rotate(-84.500)" fontSize="56">0</text>
      </g>

      <path d="M231 438H1165V472H231z" fill="#555" />
      <path d="M539 438H854V448H539z" fill="#969696" />
      <path d="M539 448H854V472H539z" fill="#818181" />
      <path d="M231 474H1169V168" fill="none" stroke="#fff" strokeWidth="2" />

      <g fill="none" stroke="#777">
        <circle cx="798" cy="421.500" r="225.500" />
        <circle cx="798" cy="196" r="14" />
        <circle cx="798" cy="647" r="14" />
        <circle cx="573" cy="421.500" r="14" />
        <circle cx="1023" cy="421.500" r="14" />
      </g>
      <g fill="none" stroke="#a39a94">
        <polyline points={innerArc} />
        <polyline points={midArc} />
        {ribs.map(([x1, y1, x2, y2], i) => (
          <line key={i} x1={x1} y1={y1} x2={x2} y2={y2} />
        ))}
      </g>
      <polyline points={outerArc} fill="none" stroke="#fff" strokeWidth="2" />
      <path d="M627 551h-9l-5 55" fill="none" stroke="#ff0" strokeWidth="2" />

      {/* 坐标轴 */}
      <path d="M286 625V584" stroke="#0f0" strokeWidth="4" />
      <path d="M286 575l4 12h-8z" fill="#0f0" />
      <path d="M286 625H325" stroke="#f00" strokeWidth="4" />
      <path d="M336 625l-13-4v8z" fill="#f00" />
      <circle cx="286" cy="625" r="4" fill="#0080ff" />
      <path d="m295 579 5 5 5-5M300 584v4" fill="none" stroke="#0f0" />
      <path d="m323 605 9 9M332 605l-9 9" stroke="#f00" />
      <path d="M273 621h8l-8 8h8" fill="none" stroke="#0080ff" />
    </svg>
  )
}

function DisplayPanel() {
  return (
    <section className="absolute left-[9px] top-0.5 flex h-[179px] w-[168px] flex-col border border-[#333] bg-white p-px">
      <h3 className="h-[30px] pl-1.5 leading-7 text-[#999]">钢筋显示控制面板</h3>
      <div className="flex-1 border border-[#8a8a94] pl-[3px] pt-px">
        {["分布筋", "板负筋", "显示其它图元", "显示详细公式"].map((t) => (
          <label key={t} className="flex h-3 items-center gap-1 leading-3">
            <input type="checkbox" defaultChecked className="peer sr-only" />
            <svg viewBox="0 0 11 11" className="size-[11px]"><path d="M.5.5h10v10H.5z" fill="#fff" stroke="#777" /><path d="m2.500 5.500 2 2 4-4" fill="none" stroke="#333" strokeWidth="1.300" /></svg>
            {t}
          </label>
        ))}
      </div>
    </section>
  )
}

function Workspace() {
  return (
    <main className="flex min-w-0 flex-1 flex-col pr-px pt-px">
      <div className="flex h-7 shrink-0 items-center">
        <Group className="pr-1">
          <Handle />
          <Tool icon="brush" label="删除" disabled />
          <Sep />
          <Tool icon="copy" label="复制" disabled />
          <Tool icon="mirror" label="镜像" disabled />
          <Sep />
          <Tool icon="move" label="移动" disabled />
          <Tool icon="rotate" label="旋转" disabled />
          <Sep />
          <Tool icon="extend" label="延伸" disabled />
          <Tool icon="trim" label="修剪" disabled />
          <Sep />
          <Tool icon="breakIcon" label="打断" disabled />
          <Tool icon="breakIcon" label="合并" disabled />
          <Tool icon="split" label="分割" disabled />
          <Sep />
          <Tool icon="alignEdge" label="对齐" disabled caret />
          <Tool icon="offset" label="偏移" disabled />
          <Tool icon="stretch" label="拉伸" disabled />
          <Sep />
          <Tool icon="grip" label="设置夹点" disabled />
        </Group>
      </div>
      <div className="flex h-7 shrink-0 items-center">
        <Group>
          <Handle />
          <div className="ml-0.5 mr-0.5 flex gap-[3px]">
            <Combo label="楼层" value="基础层" className="w-[57px]" />
            <Combo label="构件类型" value="板" className="w-[69px]" />
            <Combo label="构件" value="板负筋" className="w-[69px]" />
            <Combo label="名称" value="FJ-1" className="w-[69px]" />
            <Combo label="分层" value="分层板1" className="w-[69px]" />
          </div>
          <Sep />
          <Tool icon="props" label="属性" />
          <Tool icon="editBar" label="编辑钢筋" />
          <Tool icon="list" label="构件列表" />
          <Tool icon="picker" label="拾取构件" />
        </Group>
        <Group>
          <Handle />
          <Tool icon="axisPoint" label="两点" />
          <Tool icon="twoPoint" label="平行" />
          <Tool icon="axisAngle" label="点角" caret />
          <Tool icon="threeAxis" label="三点辅轴" caret />
          <Tool icon="delAxis" label="删除辅轴" />
          <Tool icon="dimension" label="尺寸标注" caret />
        </Group>
      </div>
      <div className="mb-px flex h-7 shrink-0 items-center">
        <Group>
          <Handle />
          <Tool icon="cursor" label="选择" caret />
          <Sep />
          <Tool icon="lineTool" label="直线" disabled />
          <Tool icon="arcTool" label="三点画弧" disabled caret />
          <Combo label="弧参数" value="" className="w-14 border border-[#8a8a8a]" />
          <span className="w-1" />
          <Sep />
          <Tool icon="byBeam" label="按梁布置" caret />
          <Tool icon="byWall" label="按墙布置" />
          <Tool icon="bySlab" label="按板边布置" />
          <Tool icon="byLine" label="画线布置" />
          <Sep />
          <Tool icon="swap" label="交换左右标注" />
          <Tool icon="viewBar" label="查看布筋" caret />
          <button className="flex shrink-0 items-center gap-1 whitespace-nowrap px-1">
            <span className="flex h-4 w-4 items-center justify-center border border-[#1c4aa0] bg-[#e5eefc] font-['Liberation_Serif',serif] text-[10px] leading-3">abc</span>
            查改标注
          </button>
          <Tool icon="autoBar" label="自动生成负筋" />
        </Group>
        <Group className="w-8">
          <Handle />
        </Group>
      </div>

      <div className="relative min-h-0 flex-1 overflow-hidden bg-black">
        <Drawing />
        <DisplayPanel />
      </div>

      <div className="flex h-[31px] shrink-0 items-center">
        <Group>
          <Handle />
          <Tool icon="ortho" label="正交" />
          <Tool icon="snap" label="对象捕捉" active />
          <Tool icon="dynInput" label="动态输入" />
        </Group>
        <Group>
          <Handle />
          <Tool icon="cross" label="交点" />
          <Tool icon="perp" label="垂点" active />
          <Tool icon="mid" label="中点" active />
          <Tool icon="vertex" label="顶点" />
          <Tool icon="coord" label="坐标" />
        </Group>
        <Group>
          <Handle />
          <Combo label="偏移方式" value="不偏移" className="mr-0.5 w-[58px]" />
          <Sep />
          <label htmlFor="dx" className="mr-0.5 text-sm leading-4 text-[#868686]">X=</label>
          <Spin id="dx" value="0" className="w-[58px]" />
          <span className="ml-0.5 mr-1 text-[#868686]">mm</span>
          <label htmlFor="dy" className="mr-0.5 text-sm leading-4 text-[#868686]">Y=</label>
          <Spin id="dy" value="0" className="w-[58px]" />
          <span className="mx-0.5 text-[#868686]">mm</span>
          <Sep />
          <label className="flex items-center gap-2 pl-0.5 pr-1">
            <input type="checkbox" className="size-[11px] appearance-none border border-[#999]" />
            旋转
          </label>
          <Spin id="rot" value="0.000" className="w-[68px]" />
          <label htmlFor="rot" className="px-1 text-[#555]">°</label>
        </Group>
      </div>
    </main>
  )
}

// ---------- 状态栏 ----------
function StatusCell({ text, className }: { text: string; className: string }) {
  return (
    <span className={clsx("whitespace-nowrap border border-[#dadada] bg-linear-to-b from-white to-[#f1f1f1] pl-px leading-5", className)}>
      <Song text={text} />
    </span>
  )
}

function StatusBar() {
  return (
    <footer className="flex h-[22px] shrink-0 gap-0.5">
      <StatusCell text="X=64791 Y=5009" className="w-[148px]" />
      <StatusCell text="层高:2.15m" className="w-[78px]" />
      <StatusCell text="底标高:-2.2m" className="w-[98px]" />
      <StatusCell text="1(3)" className="w-12" />
      <StatusCell text="" className="flex-1" />
      <StatusCell text="181.9 FPS" className="w-[70px]" />
    </footer>
  )
}

// ---------- 任务栏 ----------
function TaskButton({ label, children, className = "w-12", open, active }: { label: string; children: ReactNode; className?: string; open?: boolean; active?: boolean }) {
  return (
    <button aria-label={label} className={clsx("flex h-full shrink-0 flex-col items-center", active && "bg-[#343c40]", className)}>
      <span className="flex flex-1 items-center">
        <svg viewBox="0 0 24 24" className="size-6">{children}</svg>
      </span>
      <span className={clsx("h-0.5", active ? "w-full" : "w-10", open ? "bg-[#76b9ed]" : "bg-transparent")} />
    </button>
  )
}

function Taskbar() {
  return (
    <div className="flex h-10 shrink-0 items-center bg-[#020b0e] text-white">
      <button aria-label="开始" className="flex h-full w-12 shrink-0 items-center justify-center bg-black">
        <svg viewBox="0 0 16 16" className="size-4" fill="#fff"><path d="M0 2.300 6.500 1.400v6.200H0zM7.300 1.300 16 0v7.600H7.300zM0 8.400h6.500v6.200L0 13.700zM7.300 8.400H16V16l-8.700-1.200z" /></svg>
      </button>
      <label className="flex h-full w-[344px] shrink-0 items-center bg-[#333] px-2">
        <svg viewBox="0 0 24 24" className="size-6"><circle cx="12" cy="12" r="9" fill="none" stroke="#fff" strokeWidth="2.500" /></svg>
        <input aria-label="搜索" placeholder="在这里输入你要搜索的内容" className="ml-1 flex-1 bg-transparent text-sm outline-none placeholder:text-[#9a9a9a]" />
        <svg viewBox="0 0 16 16" className="mr-1 size-4" fill="none" stroke="#aaa"><rect x="5.500" y=".5" width="5" height="10" rx="2.500" /><path d="M3 8c0 7 10 7 10 0M8 13v3M5 15.500h6" /></svg>
      </label>
      <TaskButton label="任务视图">
        <path d="M7.500 5.500h10v13h-10zM5 7.500H2.500v9H5M20 7.500h2.500v9H20" fill="none" stroke="#fff" />
      </TaskButton>
      <TaskButton label="浏览器" className="w-[51px]">
        <rect x="1" y="1" width="11" height="11" rx="5" fill="#e4e4e4" />
        <rect x="12" y="1" width="11" height="11" rx="5" fill="#e4e4e4" />
        <rect x="1" y="12" width="11" height="11" rx="5" fill="#e4e4e4" />
        <rect x="12" y="12" width="11" height="11" rx="5" fill="#e4e4e4" />
        <path d="M7 9h10v6H7z" fill="#e4e4e4" />
        <path d="M12 1v7c0 3-3 4-6 3M23 12h-7c-3 0-4-3-3-6M12 23v-7c0-3 3-4 6-3M1 12h7c3 0 4 3 3 6" fill="none" stroke="#222" />
      </TaskButton>
      <TaskButton label="网页" className="w-[51px]">
        <path d="M19.500 15.500a8 8 0 1 1 .500-3.500H7" fill="none" stroke="#eee" strokeWidth="3.200" />
        <path d="M21 6c3-7-5-5-11 1-5 5-8 11-5 14 2 1 5 0 7-1" fill="none" stroke="#eee" strokeWidth="1.200" />
      </TaskButton>
      <TaskButton label="广联达" className="w-[51px]">
        <path d="M21 4c-3 2-5-1-9 0-7 1-10 10-5 15 5 4 13 0 12-7h-6M17 8c-4-3-9-1-9 4s6 6 8 3M13 12v3h3" fill="none" stroke="#ddd" />
      </TaskButton>
      <TaskButton label="Edge" className="w-[51px]">
        <path d="M2 11C3 4 8 1 13 1c6 0 9 5 9 9v3H9c0 5 7 6 12 3v5C13 25 4 22 5 14c0-3 2-5 4-6-3 0-5 1-7 3zm7-2h7c0-4-6-5-7 0z" fill="#0078d7" />
      </TaskButton>
      <TaskButton label="IE" className="w-[51px]">
        <path d="M19.500 15.500a8 8 0 1 1 .500-3H7" fill="none" stroke="#3fa9ea" strokeWidth="4" />
        <path d="M22 7c3-9-6-6-12 0-6 5-10 12-7 15 2 1 5 0 7-1" fill="none" stroke="#f5c52c" strokeWidth="1.800" />
      </TaskButton>
      <TaskButton label="资源管理器">
        <path d="M1 3h9l1 2h12v16H1z" fill="#f7d774" />
        <path d="M1 8h22v13H1z" fill="#ffe9a6" />
        <path d="M5 13h14v9h-4v-5H9v5H5z" fill="#35a5e5" />
      </TaskButton>
      <TaskButton label="GCL" open>
        <path d="M23 2c-3 0-4 0-8-1C8-1 1 4 1 12c0 5 3 7 4 8l1 3h11c4-3 6-7 5-12h-9v4h4c-1 5-9 5-10-1C6 7 12 4 17 6c3 0 6-1 6-4z" fill="#1e9bf0" />
      </TaskButton>
      <TaskButton label="记事" open>
        <rect width="24" height="24" rx="3" fill="#f59a1c" />
        <path d="M4 4h13v16H4z" fill="#fff3d6" />
        <path d="M6 8h8M6 11h8M6 14h5" stroke="#b4651c" />
        <path d="m21 3-8 12-1 3 3-2 8-11z" fill="#8a3c14" />
      </TaskButton>
      <TaskButton label="GGJ" open active>
        <rect width="24" height="24" rx="3" fill="#0a93f5" />
        <path d="M10 6.500 12.500 4.500v11.500c0 4-5 4.500-6 1.500M8 15c-4 1-5-4-2-5 1-.5 4-.5 6.500-.5h3.500c5 0 5 5.500 1 5.500" fill="none" stroke="#fff" strokeWidth="2" />
      </TaskButton>
      <TaskButton label="360" open>
        <circle cx="12" cy="12" r="11" fill="#48b83a" />
        <path d="M17.500 15a6 6 0 1 1 .500-3H7" fill="none" stroke="#fff" strokeWidth="3" />
        <path d="M1 17c4 2 18-4 21-13" fill="none" stroke="#bdf0a0" />
      </TaskButton>
      <span className="ml-3.5 shrink-0">链接</span>
      <span className="ml-4 w-14 shrink-0 whitespace-nowrap text-center leading-[18px]">28%<br />CPU使用</span>
      <span className="flex-1" />
      <div className="flex shrink-0 items-center gap-2">
        <svg viewBox="0 0 16 16" className="size-4"><path d="m2 11 6-6 6 6" fill="none" stroke="#fff" strokeWidth="1.300" /></svg>
        <svg viewBox="0 0 16 16" className="size-4"><path d="M4.500 5.500h10v6h-10zM15 7v3M0 4h5M1 2v3M3.500 2v3M2.500 5v5h2" fill="none" stroke="#fff" /><path d="M6 7h7v3H6z" fill="#fff" /></svg>
        <svg viewBox="0 0 16 16" className="size-4" fill="none" stroke="#ccc"><path d="M2 14A12 12 0 0 1 14 3M5 14a9 9 0 0 1 9-8M8 14a6 6 0 0 1 6-5" /><circle cx="12.500" cy="13" r="1.500" fill="#fff" /></svg>
        <svg viewBox="0 0 16 16" className="size-4" fill="none" stroke="#fff"><path d="M1 6h2.500L7 3v10L3.500 10H1zM9.500 6c1 1 1 3 0 4M11.500 4c2 2 2 6 0 8M13.500 2.500c3 3 3 8 0 11" /></svg>
        <svg viewBox="0 0 24 16" className="h-4 w-6" fill="none" stroke="#fff"><path d="M1.500 2.500h21v11h-21z" /><path d="M4 5.500h16M4 8h16" strokeDasharray="1.500 1.500" /><path d="M7 11h10" /></svg>
        <span className="text-sm">中</span>
        <svg viewBox="0 0 16 16" className="mx-1 size-4"><path d="m1 3 12-2 2 12-12 2z" fill="#f0501e" /><path d="M12 5C9 3 5 4 5 6c0 3 6 1 6 4 0 2-4 2-6.500 1" fill="none" stroke="#fff" strokeWidth="2" /></svg>
        <span className="ml-1 w-[62px] whitespace-nowrap text-center leading-5">11:19<br />2018/4/21</span>
        <span className="relative ml-2 mr-5 block size-6">
          <svg viewBox="0 0 24 24" className="size-6"><path d="M2 3h16v12H9l-3 3v-3H2z" fill="#fff" /><path d="M5 6.500h10M5 9h10M5 11.500h7" stroke="#111" /></svg>
          <b className="absolute -bottom-1 -right-1 flex size-4 items-center justify-center rounded-full border border-[#777] bg-[#333]">2</b>
        </span>
      </div>
    </div>
  )
}

export default function App() {
  return (
    <div className="flex h-screen flex-col overflow-hidden bg-[#f0f0f0] font-['Open_Sans','Noto_Sans_CJK_SC',sans-serif] text-xs text-black">
      <TitleBar />
      <MenuBar />
      <MainToolbar />
      <div className="flex min-h-0 flex-1">
        <Sidebar />
        <Workspace />
      </div>
      <StatusBar />
      <Taskbar />
    </div>
  )
}
